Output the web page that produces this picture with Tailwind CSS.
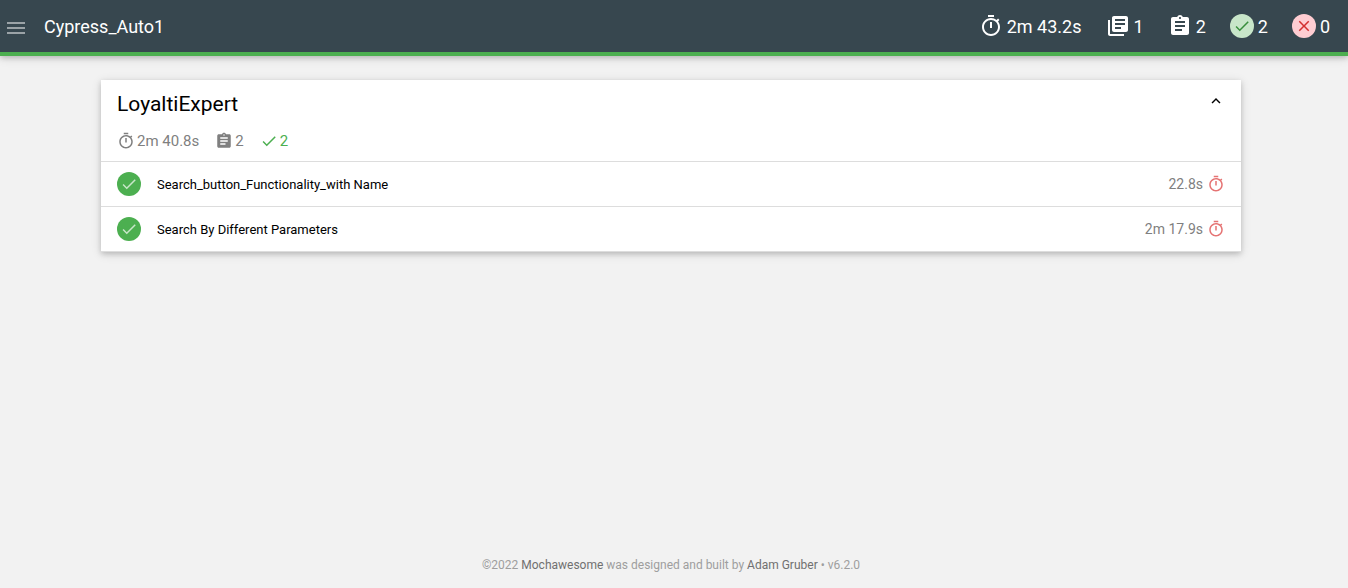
<!DOCTYPE html>
<html lang="en">
<head>
<meta charset="utf-8">
<meta name="viewport" content="width=device-width, initial-scale=1">
<title>Cypress_Auto1</title>
<script src="https://cdn.jsdelivr.net/npm/@tailwindcss/browser@4"></script>
</head>
<body class="flex min-h-screen flex-col bg-[#f2f2f2] font-['Roboto',sans-serif] text-black">
<svg class="hidden" aria-hidden="true">
  <symbol id="timer" viewBox="0 0 24 24"><path d="M15 1H9v2h6V1zm-4 13h2V8h-2v6zm8.03-6.61l1.42-1.42c-.43-.51-.9-.99-1.41-1.41l-1.42 1.42C16.07 4.74 14.12 4 12 4c-4.97 0-9 4.03-9 9s4.02 9 9 9 9-4.03 9-9c0-2.12-.74-4.07-1.97-5.61zM12 20c-3.87 0-7-3.13-7-7s3.13-7 7-7 7 3.13 7 7-3.13 7-7 7z"/></symbol>
  <symbol id="books" viewBox="0 0 24 24"><path d="M4 6H2v14c0 1.1.9 2 2 2h14v-2H4V6zm16-4H8c-1.1 0-2 .9-2 2v12c0 1.1.9 2 2 2h12c1.1 0 2-.9 2-2V4c0-1.1-.9-2-2-2zm-1 9H9V9h10v2zm-4 4H9v-2h6v2zm4-8H9V5h10v2z"/></symbol>
  <symbol id="assignment" viewBox="0 0 24 24"><path d="M19 3h-4.18C14.4 1.84 13.3 1 12 1c-1.3 0-2.4.84-2.82 2H5c-1.1 0-2 .9-2 2v14c0 1.1.9 2 2 2h14c1.1 0 2-.9 2-2V5c0-1.1-.9-2-2-2zm-7 0c.55 0 1 .45 1 1s-.45 1-1 1-1-.45-1-1 .45-1 1-1zm2 14H7v-2h7v2zm3-4H7v-2h10v2zm0-4H7V7h10v2z"/></symbol>
  <symbol id="check" viewBox="0 0 24 24"><path d="M9 16.17L4.83 12l-1.42 1.41L9 19 21 7l-1.41-1.41z"/></symbol>
  <symbol id="close" viewBox="0 0 24 24"><path d="M19 6.41L17.59 5 12 10.59 6.41 5 5 6.41 10.59 12 5 17.59 6.41 19 12 13.41 17.59 19 19 17.59 13.41 12z"/></symbol>
</svg>

<header class="flex h-14 items-center justify-between border-b-4 border-[#4caf50] bg-[#37474f] pr-[18px] pl-1 text-lg text-white shadow-[0_2px_5px_0_rgba(0,0,0,0.16),0_2px_10px_0_rgba(0,0,0,0.12)]">
  <div class="flex items-center gap-4">
    <button type="button" aria-label="Open menu" class="pt-1 text-white/50">
      <svg class="size-6 fill-current" viewBox="0 0 24 24"><path d="M3 18h18v-2H3v2zm0-5h18v-2H3v2zm0-7v2h18V6H3z"/></svg>
    </button>
    <h1 class="pt-[2px]">Cypress_Auto1</h1>
  </div>
  <ul class="flex items-center gap-6">
    <li class="flex items-center gap-1"><svg class="size-6 fill-current"><use href="#timer"/></svg><span class="pt-[2px]">2m 43.2s</span></li>
    <li class="flex items-center gap-1"><svg class="size-6 fill-current"><use href="#books"/></svg><span class="pt-[2px]">1</span></li>
    <li class="flex items-center gap-1"><svg class="size-6 fill-current"><use href="#assignment"/></svg><span class="pt-[2px]">2</span></li>
    <li class="flex items-center gap-1"><span class="flex size-6 items-center justify-center rounded-full bg-[#c8e6c9] text-[#388e3c]"><svg class="size-[18px] fill-current"><use href="#check"/></svg></span><span class="pt-[2px]">2</span></li>
    <li class="flex items-center gap-1"><span class="flex size-6 items-center justify-center rounded-full bg-[#ffcdd2] text-[#d32f2f]"><svg class="size-[18px] fill-current"><use href="#close"/></svg></span><span class="pt-[2px]">0</span></li>
  </ul>
</header>

<main class="grow pt-6 pr-[6px]">
  <section class="mx-auto max-w-[1140px] bg-white shadow-[0_2px_5px_0_rgba(0,0,0,0.16),0_2px_10px_0_rgba(0,0,0,0.12)]">
    <header class="flex items-start justify-between px-4 pt-3 pb-3">
      <div>
        <h2 class="text-[21px] leading-6">LoyaltiExpert</h2>
        <ul class="mt-[15px] flex items-center gap-4 text-[15px] leading-[18px] text-[#7f7f7f]">
          <li class="flex items-center gap-[2px]"><svg class="size-[18px] fill-current"><use href="#timer"/></svg><span class="pt-px">2m 40.8s</span></li>
          <li class="flex items-center gap-[2px]"><svg class="size-[18px] fill-current"><use href="#assignment"/></svg><span class="pt-px">2</span></li>
          <li class="flex items-center gap-[2px] text-[#4caf50]"><svg class="size-[18px] fill-current"><use href="#check"/></svg><span class="pt-px">2</span></li>
        </ul>
      </div>
      <button type="button" aria-label="Collapse suite" aria-expanded="true"><svg class="size-[18px] fill-current" viewBox="0 0 24 24"><path d="M12 8l-6 6 1.41 1.41L12 10.83l4.59 4.58L18 14z"/></svg></button>
    </header>
    <ul class="-mt-px">
      <li>
        <button type="button" class="flex h-[45px] w-full items-center border-t border-[#dddddd] px-4 text-left text-[13px]">
          <span class="mr-4 flex size-6 items-center justify-center rounded-full bg-[#4caf50] text-[#c8e6c9]"><svg class="size-[18px] fill-current"><use href="#check"/></svg></span>
          <span class="grow pt-px">Search_button_Functionality_with Name</span>
          <span class="mr-1 text-sm text-[#7f7f7f]">22.8s</span>
          <svg class="size-[18px] fill-[#e57373]"><use href="#timer"/></svg>
        </button>
      </li>
      <li>
        <button type="button" class="flex h-[46px] w-full items-center border-y border-[#dddddd] px-4 text-left text-[13px]">
          <span class="mr-4 flex size-6 items-center justify-center rounded-full bg-[#4caf50] text-[#c8e6c9]"><svg class="size-[18px] fill-current"><use href="#check"/></svg></span>
          <span class="grow pt-px">Search By Different Parameters</span>
          <span class="mr-1 text-sm text-[#7f7f7f]">2m 17.9s</span>
          <svg class="size-[18px] fill-[#e57373]"><use href="#timer"/></svg>
        </button>
      </li>
    </ul>
  </section>
</main>

<footer class="pr-[6px] pb-[15px] text-center text-xs leading-4 text-[#9e9e9e]">
  <p>©2022 <a href="#" class="text-[#707070]">Mochawesome</a> was designed and built by <a href="#" class="text-[#707070]">Adam Gruber</a> • v6.2.0</p>
</footer>
</body>
</html>
